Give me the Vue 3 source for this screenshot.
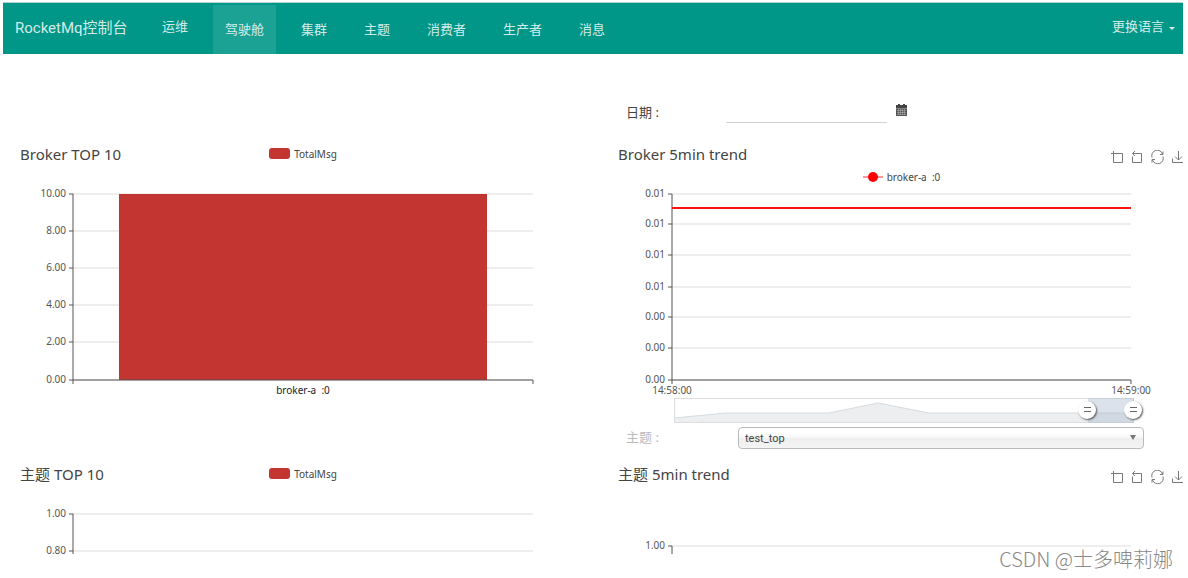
<script setup>
import { ref } from 'vue'

const tabs = ['运维', '驾驶舱', '集群', '主题', '消费者', '生产者', '消息']
const activeTab = ref('驾驶舱')

const topic = ref('test_top')
const date = ref('')
const zoomStart = ref(90)
const zoomEnd = ref(100)

const barTicks = [
  { label: '10.00', y: 8 },
  { label: '8.00', y: 45 },
  { label: '6.00', y: 82 },
  { label: '4.00', y: 119 },
  { label: '2.00', y: 156 },
  { label: '0.00', y: 194 },
]
const trendTicks = [
  { label: '0.01', y: 8 },
  { label: '0.01', y: 38 },
  { label: '0.01', y: 69 },
  { label: '0.01', y: 101 },
  { label: '0.00', y: 131 },
  { label: '0.00', y: 162 },
  { label: '0.00', y: 194 },
]
const topicTicks = [
  { label: '1.00', y: 8 },
  { label: '0.80', y: 45 },
]

const tools = [
  { name: '区域缩放', paths: ['M0 3.5H11.5V12.5H2.5V1'] },
  { name: '区域缩放还原', paths: ['M1.5 3.5H10.5V12.5H1.5V6.5', 'M4 1L1.5 3.5L4 6'] },
  { name: '还原', paths: ['M1 7.5A5.5 5.5 0 0 1 11.5 4', 'M12 1.5V4.5H9', 'M12 6.5A5.5 5.5 0 0 1 1.5 10', 'M1 12.5V9.5H4'] },
  { name: '保存为图片', paths: ['M7.5 1V10', 'M4 6.5L7.5 10L11 6.5', 'M1.5 8.5V12.5H13.5V8.5'] },
]
</script>

<template>
  <div class="page">
    <header class="navbar">
      <a class="brand" href="#">RocketMq控制台</a>
      <nav class="tabs">
        <a
          v-for="(tab, i) in tabs"
          :key="tab"
          href="#"
          class="tab"
          :class="{ active: tab === activeTab, lead: i === 0 }"
          @click.prevent="activeTab = tab"
        >{{ tab }}</a>
      </nav>
      <button class="language" type="button">更换语言<span class="caret"></span></button>
    </header>

    <main class="board">
      <div class="field date-field">
        <label for="date">日期 :</label>
        <input id="date" v-model="date" type="text" />
        <button class="calendar" type="button" aria-label="选择日期">
          <svg width="11" height="12" viewBox="0 0 11 12">
            <path d="M0 1H11V4H0Z M2 0H4V2H2Z M7 0H9V2H7Z" fill="#444" />
            <rect x="0" y="4" width="11" height="8" fill="#555" />
            <path d="M0 4.5H11M1 6.5H10M1 8.5H10M1 10.5H10M2.5 5V11M4.5 5V11M6.5 5V11M8.5 5V11" stroke="#bbb" stroke-width=".5" />
          </svg>
        </button>
      </div>

      <section class="panel">
        <div class="panel-head">
          <h2>Broker TOP 10</h2>
          <span class="legend"><i class="swatch"></i>TotalMsg</span>
        </div>
        <div class="sub"></div>
        <svg class="plot" viewBox="0 0 574 211">
          <g v-for="t in barTicks" :key="t.label">
            <path class="split" :d="`M57 ${t.y}H517`" />
            <path class="axis" :d="`M53 ${t.y}H57`" />
            <text x="50" :y="t.y + 3" text-anchor="end">{{ t.label }}</text>
          </g>
          <rect x="103" y="8" width="368" height="186" fill="#c23531" />
          <path class="axis" d="M57 8V198M57 194H517V198" />
          <text class="dark" x="287" y="208" text-anchor="middle">broker-a&nbsp; :0</text>
        </svg>
      </section>

      <section class="panel">
        <div class="panel-head">
          <h2>Broker 5min trend</h2>
          <div class="toolbar">
            <button v-for="t in tools" :key="t.name" type="button" :aria-label="t.name">
              <svg width="14" height="14" viewBox="0 0 14 14"><path v-for="p in t.paths" :key="p" :d="p" /></svg>
            </button>
          </div>
        </div>
        <div class="sub">
          <span class="legend">
            <svg width="20" height="10" viewBox="0 0 20 10">
              <path d="M0 5H20" stroke="#f33" />
              <circle cx="10" cy="5" r="5" fill="#f00" />
            </svg>broker-a&nbsp; :0
          </span>
        </div>
        <svg class="plot" viewBox="0 0 574 211">
          <g v-for="t in trendTicks" :key="t.y">
            <path class="split" :d="`M58 ${t.y}H517`" />
            <path class="axis" :d="`M54 ${t.y}H58`" />
            <text x="51" :y="t.y + 3" text-anchor="end">{{ t.label }}</text>
          </g>
          <path class="axis" d="M58 8V198M58 194H517V198" />
          <path class="series" d="M58 22H517" />
          <text x="58" y="208" text-anchor="middle">14:58:00</text>
          <text x="517" y="208" text-anchor="middle">14:59:00</text>
        </svg>
        <div class="zoom">
          <svg viewBox="0 0 460 25" preserveAspectRatio="none">
            <path d="M0 20L52 15H155L204 5L255 15H460V25H0Z" fill="#eceef0" />
            <path d="M0 20L52 15H155L204 5L255 15H460" fill="none" stroke="#d5dcdf" />
            <rect x="0" y="0" width="460" height="25" fill="none" stroke="#ddd" stroke-width="2" />
            <rect :x="zoomStart * 4.6" y="0" :width="(zoomEnd - zoomStart) * 4.6" height="25" fill="#a7b7cc" fill-opacity=".4" />
          </svg>
          <input v-model.number="zoomStart" type="range" min="0" max="100" aria-label="开始" />
          <input v-model.number="zoomEnd" type="range" min="0" max="100" aria-label="结束" />
        </div>
      </section>

      <div class="field topic-field">
        <label for="topic">主题 :</label>
        <span class="select">
          <select id="topic" v-model="topic"><option>test_top</option></select>
          <svg width="6" height="6" viewBox="0 0 6 6"><path d="M0 0H6L3 5Z" fill="#777" /></svg>
        </span>
      </div>

      <section class="panel">
        <div class="panel-head">
          <h2>主题 TOP 10</h2>
          <span class="legend"><i class="swatch"></i>TotalMsg</span>
        </div>
        <div class="sub"></div>
        <svg class="plot" viewBox="0 0 574 48">
          <g v-for="t in topicTicks" :key="t.label">
            <path class="split" :d="`M57 ${t.y}H517`" />
            <path class="axis" :d="`M53 ${t.y}H57`" />
            <text x="50" :y="t.y + 3" text-anchor="end">{{ t.label }}</text>
          </g>
          <path class="axis" d="M57 8V48" />
        </svg>
      </section>

      <section class="panel">
        <div class="panel-head">
          <h2>主题 5min trend</h2>
          <div class="toolbar">
            <button v-for="t in tools" :key="t.name" type="button" :aria-label="t.name">
              <svg width="14" height="14" viewBox="0 0 14 14"><path v-for="p in t.paths" :key="p" :d="p" /></svg>
            </button>
          </div>
        </div>
        <div class="sub"></div>
        <svg class="plot" viewBox="0 0 574 48">
          <path class="split" d="M58 40H517" />
          <path class="axis" d="M54 40H58V48" />
          <text x="51" y="43" text-anchor="end">1.00</text>
        </svg>
      </section>
    </main>

    <div class="watermark">CSDN @士多啤莉娜</div>
  </div>
</template>

<style>
body {
  background: #fff;
}
</style>

<style scoped>
.page {
  position: relative;
  margin: 0 5px 0 3px;
  padding: 2px 0 24px;
  overflow: hidden;
  font-family: "Noto Sans", "Noto Sans CJK SC", sans-serif;
  color: #444;
}
button {
  border: 0;
  padding: 0;
  background: none;
  font: inherit;
  color: inherit;
}
.navbar {
  display: flex;
  height: 51px;
  padding: 0 8px 0 12px;
  border-top: 1px solid #b5d3d0;
  background: #009688;
  font: 13px/48px Roboto, "Noto Sans CJK SC", sans-serif;
  color: rgba(255, 255, 255, 0.84);
}
.navbar a {
  color: inherit;
  text-decoration: none;
}
.brand {
  width: 135px;
  font-size: 15px;
  line-height: 50px;
}
.tabs {
  display: flex;
  flex: 1;
  gap: 13px;
}
.tab {
  margin-top: 2px;
  padding: 0 12px;
  height: 49px;
  line-height: 50px;
}
.lead {
  margin-top: 0;
  line-height: 48px;
}
.active {
  background: rgba(255, 255, 255, 0.11);
}
.language {
  display: flex;
  align-items: center;
  gap: 5px;
  height: 48px;
}
.caret {
  margin-top: 2px;
  border: 3px solid transparent;
  border-top-color: currentColor;
  border-bottom: 0;
}
.board {
  display: grid;
  grid-template-columns: minmax(0, 1fr) minmax(0, 1fr);
  column-gap: 24px;
  margin: 0 -5px 0 13px;
}
.field {
  grid-column: 2;
  display: flex;
  align-items: center;
  font-size: 13px;
}
.date-field {
  height: 24px;
  margin: 45px 0 21px;
}
.field label {
  box-sizing: border-box;
  width: 112px;
  padding-left: 12px;
}
.date-field input {
  box-sizing: border-box;
  width: 161px;
  height: 24px;
  border: 0;
  border-bottom: 1px solid #d2d2d2;
  background: none;
}
.calendar {
  height: 12px;
  margin: 0 0 2px 9px;
  line-height: 0;
}
.panel-head {
  display: grid;
  grid-template-columns: 1fr auto 1fr;
  align-items: center;
  height: 21px;
}
h2 {
  margin: 0 0 0 4px;
  font-size: 15px;
  font-weight: 400;
  line-height: 21px;
  white-space: nowrap;
}
.legend {
  display: flex;
  align-items: center;
  gap: 4px;
  font-size: 10px;
  line-height: 16px;
}
.panel-head .legend {
  padding-bottom: 2px;
}
.swatch {
  width: 21px;
  height: 11px;
  border-radius: 3px;
  background: #c23531;
}
.toolbar {
  grid-column: 3;
  display: flex;
  justify-content: flex-end;
  gap: 6px;
  margin: 4px 3px 0 0;
}
.toolbar button {
  line-height: 0;
}
.toolbar path {
  fill: none;
  stroke: #777;
}
.sub {
  display: flex;
  align-items: center;
  justify-content: center;
  height: 19px;
  padding: 2px 0 0 1px;
}
.plot {
  display: block;
  width: 100%;
  overflow: visible;
}
.plot text {
  font-size: 10px;
  fill: #555;
}
.plot .dark {
  fill: #222;
}
.split {
  stroke: #ddd;
  fill: none;
}
.axis {
  stroke: #555;
  fill: none;
}
.series {
  stroke: #f11;
  stroke-width: 2;
}
.zoom {
  position: relative;
  height: 25px;
  margin: 1px 54px 0 60px;
}
.zoom svg {
  display: block;
  width: 100%;
  height: 25px;
}
.zoom input {
  position: absolute;
  top: 3px;
  left: -10px;
  width: calc(100% + 18px);
  height: 18px;
  margin: 0;
  appearance: none;
  background: none;
  pointer-events: none;
}
.zoom input::-webkit-slider-thumb {
  appearance: none;
  width: 18px;
  height: 18px;
  border-radius: 50%;
  background:
    linear-gradient(#666, #666) 50% 6px / 7px 1px no-repeat,
    linear-gradient(#666, #666) 50% 10px / 7px 1px no-repeat,
    #fff;
  box-shadow: 1px 1px 2px #555;
  pointer-events: auto;
}
.topic-field {
  height: 22px;
  margin: 4px 0 15px;
}
.topic-field label {
  width: 124px;
  padding-bottom: 4px;
  color: #bbb;
}
.select {
  position: relative;
  flex: 1;
  margin-right: 44px;
}
.select select {
  display: block;
  width: 100%;
  height: 22px;
  padding: 0 6px;
  border: 1px solid #bbb;
  border-radius: 4px;
  appearance: none;
  background: linear-gradient(#fff 20%, #f6f6f6 50%, #eee 52%, #f4f4f4);
  font: 11px Roboto, sans-serif;
  color: #444;
}
.select svg {
  position: absolute;
  right: 8px;
  top: 8px;
}
.watermark {
  position: absolute;
  right: 10px;
  bottom: 5px;
  font: 300 20px/28px "Noto Sans CJK SC", sans-serif;
  color: #888;
  text-shadow: -1px -1px 0 #fff;
}
</style>
